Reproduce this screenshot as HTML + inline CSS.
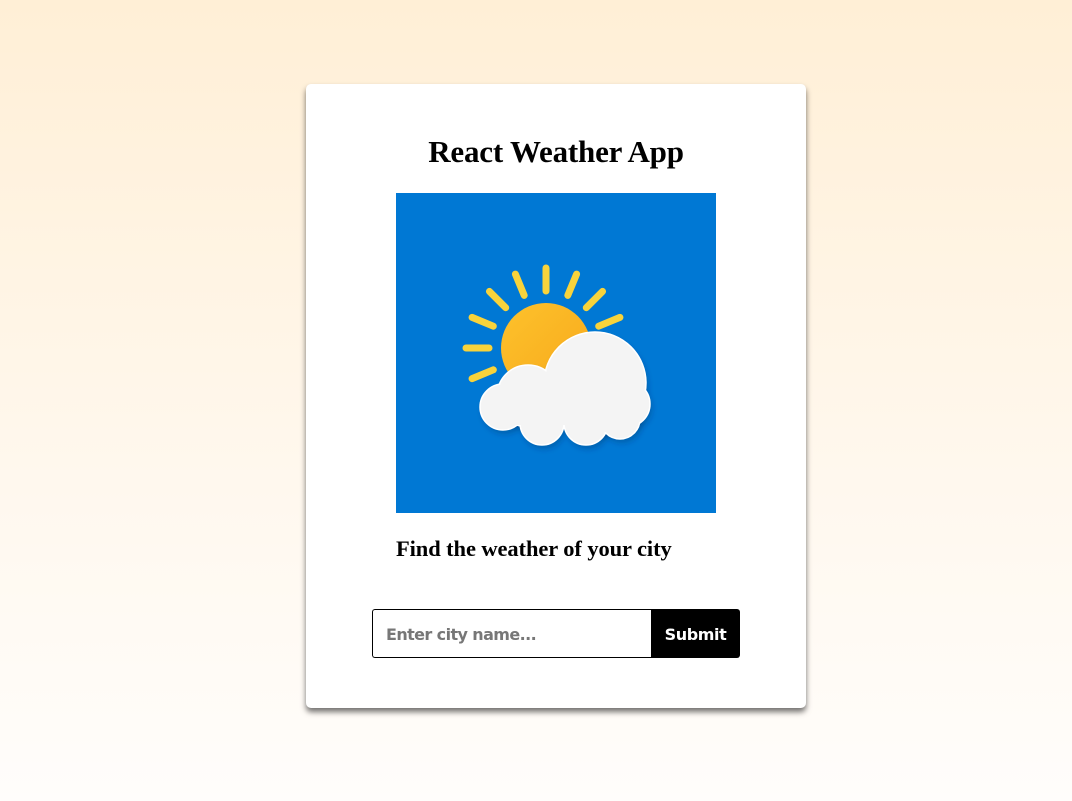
<!DOCTYPE html>
<html><head><meta charset="utf-8">
<style>
html,body{margin:0;padding:0}
body{width:1072px;height:801px;background:linear-gradient(#ffefd6,#fff8ee 60%,#fffdfb);font-family:"Liberation Serif",serif;position:relative;overflow:hidden}
.card{position:absolute;left:306px;top:84px;width:500px;height:624px;background:#fff;border-radius:5px;box-shadow:0 4px 6px rgba(0,0,0,.55)}
h1{position:absolute;left:0;width:100%;top:50px;margin:0;text-align:center;font-size:31px;font-weight:bold;line-height:36px;letter-spacing:-0.2px}
.img{position:absolute;left:90px;top:109px;width:320px;height:320px}
h3{position:absolute;left:90px;top:452px;margin:0;font-size:22.5px;line-height:26px;font-weight:bold;letter-spacing:-0.1px}
.inp{position:absolute;left:66px;top:525px;width:278px;height:47px;border:1px solid #000;border-right:none;border-radius:3px 0 0 3px;font-family:"DejaVu Sans",Verdana,sans-serif;font-weight:bold;font-size:16px;letter-spacing:-0.6px;color:#777;line-height:50px;padding-left:13px;box-sizing:content-box}
.btn{position:absolute;left:345px;top:525px;width:89px;height:49px;background:#000;color:#fff;border-radius:0 3px 3px 0;font-family:"DejaVu Sans",Verdana,sans-serif;font-weight:bold;font-size:16px;letter-spacing:-0.4px;line-height:51px;text-align:center}
</style></head><body>
<div class="card">
<h1>React Weather App</h1>
<svg class="img" viewBox="0 0 320 320" width="320" height="320">
<defs><filter id="sh" x="-20%" y="-20%" width="140%" height="140%"><feGaussianBlur stdDeviation="3"/></filter>
<linearGradient id="sg" x1="0" y1="0" x2="1" y2="1"><stop offset="0" stop-color="#fdc22c"/><stop offset="1" stop-color="#f7a81b"/></linearGradient></defs>
<rect width="320" height="320" fill="#0078d4"/>
<g stroke="#f8d33b" stroke-width="7" stroke-linecap="round" transform="translate(150,155)">
<line x1="-57" y1="0" x2="-80" y2="0" transform="rotate(-22.5)"/>
<line x1="-57" y1="0" x2="-80" y2="0"/>
<line x1="-57" y1="0" x2="-80" y2="0" transform="rotate(22.5)"/>
<line x1="-57" y1="0" x2="-80" y2="0" transform="rotate(45)"/>
<line x1="-57" y1="0" x2="-80" y2="0" transform="rotate(67.5)"/>
<line x1="-57" y1="0" x2="-80" y2="0" transform="rotate(90)"/>
<line x1="-57" y1="0" x2="-80" y2="0" transform="rotate(112.5)"/>
<line x1="-57" y1="0" x2="-80" y2="0" transform="rotate(135)"/>
<line x1="-57" y1="0" x2="-80" y2="0" transform="rotate(157.5)"/>
<line x1="-57" y1="0" x2="-80" y2="0" transform="rotate(180)"/>
</g>
<circle cx="150" cy="155" r="45" fill="url(#sg)"/>
<g fill="rgba(0,40,90,.3)" filter="url(#sh)" transform="translate(2,4)">
<circle cx="199" cy="190" r="51"/><circle cx="132" cy="203" r="31"/><circle cx="107" cy="214" r="23"/><circle cx="231" cy="211" r="23"/><circle cx="146" cy="230" r="22"/><circle cx="190" cy="230" r="22"/><circle cx="224" cy="226" r="20"/>
</g>
<g fill="#f4f4f4" stroke="#fff" stroke-width="1.5">
<circle cx="199" cy="190" r="51"/><circle cx="132" cy="203" r="31"/><circle cx="107" cy="214" r="23"/><circle cx="231" cy="211" r="23"/><circle cx="146" cy="230" r="22"/><circle cx="190" cy="230" r="22"/><circle cx="224" cy="226" r="20"/>
</g>
<g fill="#f4f4f4"><circle cx="199" cy="190" r="50"/><circle cx="132" cy="203" r="30"/><circle cx="107" cy="214" r="22"/><circle cx="231" cy="211" r="22"/><circle cx="146" cy="230" r="21"/><circle cx="190" cy="230" r="21"/><circle cx="224" cy="226" r="19"/><rect x="107" y="200" width="124" height="32"/></g>
</svg>
<h3>Find the weather of your city</h3>
<div class="inp">Enter city name...</div>
<div class="btn">Submit</div>
</div>
</body></html>
